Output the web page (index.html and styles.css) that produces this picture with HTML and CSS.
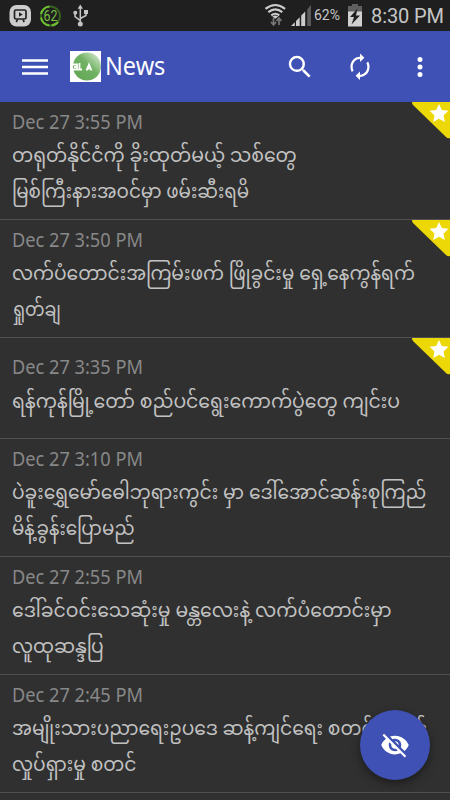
FILE: index.html
```html
<!DOCTYPE html>
<html lang="my">
<head>
<meta charset="utf-8">
<title>News</title>
<link rel="stylesheet" href="styles.css">
</head>
<body>
<div class="status">
  <svg class="status-left" width="100" height="31" viewBox="0 0 100 31">
    <rect x="9.500" y="5" width="21.500" height="21.500" rx="7" fill="#ccc"/>
    <rect x="14.500" y="10" width="11.500" height="9" rx="1.500" fill="none" stroke="#222" stroke-width="1.700"/>
    <path d="M17.500 19.500l-1.200 2.600M23 19.500l1.200 2.600" stroke="#222" stroke-width="1.700"/>
    <path d="M19 12.300v4.400l3.800-2.200z" fill="#222"/>
    <circle cx="50.500" cy="16" r="9.500" fill="none" stroke="#38621f" stroke-width="2"/>
    <path d="M49.500 25.500a9.500 9.500 0 0 1-8.500-8M41 14a9.500 9.500 0 0 1 8.500-7.500M51.500 25.400a9.500 9.500 0 0 0 6.500-3.400" fill="none" stroke="#6fbd35" stroke-width="2"/>
    <text x="50.500" y="20.900" text-anchor="middle" class="gauge" textLength="14" lengthAdjust="spacingAndGlyphs">62</text>
    <path d="M80.300 7v17M75 13.500v3.200l5.300 4M86 11v4.500l-5.700 3" fill="none" stroke="#c4c4c4" stroke-width="1.500"/>
    <path d="M80.300 4.500l-2.700 4.300h5.400zM84 10h4v4h-4z" fill="#c4c4c4"/>
    <circle cx="75.300" cy="12.800" r="2" fill="#c4c4c4"/><circle cx="80.300" cy="24" r="2.500" fill="#c4c4c4"/>
  </svg>
  <svg class="status-icons" width="50" height="31" viewBox="0 0 50 31">
    <g fill="none" stroke="#ccc" stroke-width="2.100"><path d="M.5 8.800q9.800-7.600 19.600 0M3.300 12.100q7-5.600 14 0M6.300 15.400q4-3.300 8 0"/></g>
    <path d="M10.300 18.800l-3-2.300q3-1.800 6 0z" fill="#ccc"/>
    <path d="M8.500 18v7M6 22l2.500 3 2.500-3M14 25v-7M11.500 21l2.500-3 2.500 3" fill="none" stroke="#777" stroke-width="1.700"/>
    <path d="M42.200 9.500L46 5v21h-3.800z" fill="#5b5b5b"/>
    <path d="M26 26l3.800-3.800V26zM31 21l3.700-3.800V26H31zM36.200 15.500l4-4V26h-4z" fill="#ccc"/>
  </svg>
  <span class="percent">62%</span>
  <svg class="battery" width="16" height="31" viewBox="0 0 16 31">
    <path d="M5 4h6v2h4v9H1V6h4z" fill="#606060"/><path d="M1 11.500h14v15H1z" fill="#d0d0d0"/><path d="M10.500 8.500L3 17h4l-2.500 7.500L13 15.500H9z" fill="#202020"/>
  </svg>
  <span class="clock">8:30 PM</span>
</div>
<header class="bar">
  <svg class="menu" width="26" height="16" viewBox="0 0 26 16"><path d="M0 1.500h26M0 8h26M0 14.500h26" stroke="#fff" stroke-width="2.400"/></svg>
  <svg class="logo" width="31" height="31" viewBox="0 0 31 31">
    <defs><linearGradient id="g" x1="0" y1="1" x2="1" y2="0"><stop offset="0" stop-color="#5fa552"/><stop offset=".55" stop-color="#72b265"/><stop offset="1" stop-color="#e4f2de"/></linearGradient></defs>
    <path d="M0 0h31v31H0z" fill="#fff"/><circle cx="17" cy="15.500" r="14" fill="url(#g)"/>
    <path d="M3 13.500h4v5H3M4 16h3M9.500 12v7M8 18.500h4M16.500 19.500l2.500-6 2.500 6M17 17.500h4" fill="none" stroke="#fff" stroke-width="1.800"/>
  </svg>
  <h1><span>News</span></h1>
  <svg class="search" width="30" height="30" viewBox="0 0 24 24"><path fill="#fff" d="M15.500 14h-.79l-.28-.27A6.470 6.470 0 0 0 16 9.500 6.500 6.500 0 1 0 9.500 16c1.610 0 3.090-.59 4.230-1.570l.27.28v.79l5 4.990L20.490 19l-4.990-5zm-6 0C7.010 14 5 11.990 5 9.500S7.010 5 9.500 5 14 7.010 14 9.500 11.990 14 9.500 14z"/></svg>
  <svg class="refresh" width="30" height="30" viewBox="0 0 24 24"><path fill="#fff" d="M12 4.500v2.800l3.900-3.800L12-.3V2.500C7 2.500 3.500 6.600 3.500 11.500c0 1.800.5 3.400 1.300 4.700l1.500-1.500a6.700 6.700 0 0 1-.8-3.200C5.500 7.600 8.300 4.500 12 4.500zm7.200 2.300l-1.500 1.500c.5.900.8 2 .8 3.200 0 3.900-2.800 7-6.500 7v-2.800l-3.900 3.800 3.900 3.800v-2.800c5 0 8.500-4.100 8.500-9 0-1.800-.5-3.400-1.300-4.700z" transform="translate(1.200 1.500) scale(.9)"/></svg>
  <svg class="more" width="30" height="30" viewBox="0 0 24 24"><path fill="#fff" d="M12 8a2 2 0 1 0 0-4 2 2 0 0 0 0 4zm0 2a2 2 0 1 0 0 4 2 2 0 0 0 0-4zm0 6a2 2 0 1 0 0 4 2 2 0 0 0 0-4z"/></svg>
</header>
<main>
  <article class="item first"><time>Dec 27 3:55 PM</time><p><span class="wide">တရုတ်နိုင်ငံကို ခိုးထုတ်မယ့် သစ်တွေ</span><span class="narrow">မြစ်ကြီးနားအဝင်မှာ ဖမ်းဆီးရမိ</span></p>
    <svg class="flag" width="38" height="37" viewBox="0 0 38 37"><path d="M0 0h38v36q-2 1-4-1L1 3Q0 2 0 0z" fill="#ecd806"/><path d="M27 2l2.800 6 6.600.8-4.900 4.600 1.300 6.500-5.800-3.200-5.800 3.200 1.300-6.500-4.900-4.600 6.600-.8z" fill="#fff"/></svg></article>
  <article class="item"><time>Dec 27 3:50 PM</time><p><span>လက်ပံတောင်းအကြမ်းဖက် ဖြိုခွင်းမှု ရှေ့နေကွန်ရက်</span><span class="tight">ရှုတ်ချ</span></p>
    <svg class="flag" width="38" height="37" viewBox="0 0 38 37"><path d="M0 0h38v36q-2 1-4-1L1 3Q0 2 0 0z" fill="#ecd806"/><path d="M27 2l2.800 6 6.600.8-4.900 4.600 1.300 6.500-5.800-3.200-5.800 3.200 1.300-6.500-4.900-4.600 6.600-.8z" fill="#fff"/></svg></article>
  <article class="item single"><time>Dec 27 3:35 PM</time><p><span class="wide">ရန်ကုန်မြို့တော် စည်ပင်ရွေးကောက်ပွဲတွေ ကျင်းပ</span></p>
    <svg class="flag" width="38" height="37" viewBox="0 0 38 37"><path d="M0 0h38v36q-2 1-4-1L1 3Q0 2 0 0z" fill="#ecd806"/><path d="M27 2l2.800 6 6.600.8-4.900 4.600 1.300 6.500-5.800-3.200-5.800 3.200 1.300-6.500-4.900-4.600 6.600-.8z" fill="#fff"/></svg></article>
  <article class="item"><time>Dec 27 3:10 PM</time><p><span>ပဲခူးရွှေမော်ဓေါဘုရားကွင်း မှာ ဒေါ်အောင်ဆန်းစုကြည်</span><span class="narrow">မိန့်ခွန်းပြောမည်</span></p></article>
  <article class="item"><time>Dec 27 2:55 PM</time><p><span class="wide">ဒေါ်ခင်ဝင်းသေဆုံးမှု မန္တလေးနဲ့ လက်ပံတောင်းမှာ</span><span>လူထုဆန္ဒပြ</span></p></article>
  <article class="item"><time>Dec 27 2:45 PM</time><p><span>အမျိုးသားပညာရေးဥပဒေ ဆန့်ကျင်ရေး စတစ်ကောင်</span><span>လှုပ်ရှားမှု စတင်</span></p></article>
</main>
<div class="fab"><svg width="30" height="30" viewBox="0 0 24 24"><path fill="#fff" d="M12 7c2.760 0 5 2.240 5 5 0 .65-.13 1.260-.36 1.830l2.920 2.920c1.510-1.260 2.700-2.890 3.430-4.750-1.730-4.390-6-7.500-11-7.500-1.400 0-2.740.25-3.980.7l2.160 2.160C10.740 7.130 11.350 7 12 7zM2 4.270l2.280 2.280.46.460A11.800 11.800 0 0 0 1 12c1.730 4.390 6 7.500 11 7.500 1.550 0 3.030-.3 4.380-.84l.42.42L19.730 22 21 20.730 3.270 3 2 4.270zM7.530 9.800l1.550 1.550c-.05.21-.08.43-.08.65 0 1.660 1.340 3 3 3 .22 0 .44-.03.65-.08l1.550 1.550c-.67.33-1.410.53-2.200.53-2.760 0-5-2.240-5-5 0-.79.2-1.530.53-2.200zm4.310-.78l3.150 3.150.02-.16c0-1.660-1.340-3-3-3z"/></svg></div>
</body>
</html>
```
FILE: styles.css
```css
* { box-sizing: border-box; }
body {
  margin: 0;
  width: 450px;
  height: 800px;
  overflow: hidden;
  background: #303030;
  color: #c2c2c2;
  font-family: "Noto Sans", "Noto Sans Myanmar", Padauk, sans-serif;
}
svg { display: block; flex: none; }
.status {
  height: 31px;
  display: flex;
  align-items: center;
  background: #1f1f1f;
  color: #c6c6c6;
  font-family: Roboto, sans-serif;
  white-space: nowrap;
}
.gauge { font: 15.500px Roboto, sans-serif; fill: #7ac142; }
.status-icons { margin-left: 165px; }
.percent { width: 28px; font-size: 14px; line-height: 33px; margin-left: -1px; }
.battery { margin-left: 5px; }
.clock { margin-left: 8px; font-size: 20px; line-height: 32px; letter-spacing: -.1px; }
.bar {
  height: 71px;
  display: flex;
  align-items: center;
  background: #3f51b5;
  color: #fff;
}
.menu { margin-left: 22px; }
.logo { margin-left: 22px; }
h1 {
  margin: 0 0 3px 4px;
  width: 180px;
  font-weight: 400;
  font-size: 25px;
  line-height: 34px;
}
h1 span {
  display: inline-block;
  transform: scaleX(.94);
  transform-origin: left;
}
.refresh, .more { margin-left: 30px; }
.item {
  position: relative;
  height: 118px;
  padding: 8px 12px 0;
  border-bottom: 1px solid #505050;
}
.item.single { height: 101px; padding-top: 17px; }
.item.single p { margin-top: 3px; }
time {
  display: block;
  width: 160px;
  height: 25px;
  font-size: 20px;
  line-height: 24px;
  color: #888;
  transform: scaleX(.91);
  transform-origin: left;
  white-space: nowrap;
}
p {
  margin: 2px 0 0;
  font-size: 19.5px;
  line-height: 36px;
  white-space: nowrap;
}
p span {
  display: block;
  width: max-content;
  transform: scaleX(.957);
  transform-origin: left;
}
p .wide { transform: scaleX(.966); }
p .narrow { transform: scaleX(.938); }
p .tight { transform: scaleX(.89); }
.flag { position: absolute; right: 0; top: 0; }
.fab {
  position: absolute;
  left: 360px;
  top: 710px;
  width: 70px;
  height: 70px;
  border-radius: 50%;
  display: flex;
  align-items: center;
  justify-content: center;
  background: #3f51b5;
  box-shadow: 0 4px 10px rgba(0, 0, 0, .4);
}
```
